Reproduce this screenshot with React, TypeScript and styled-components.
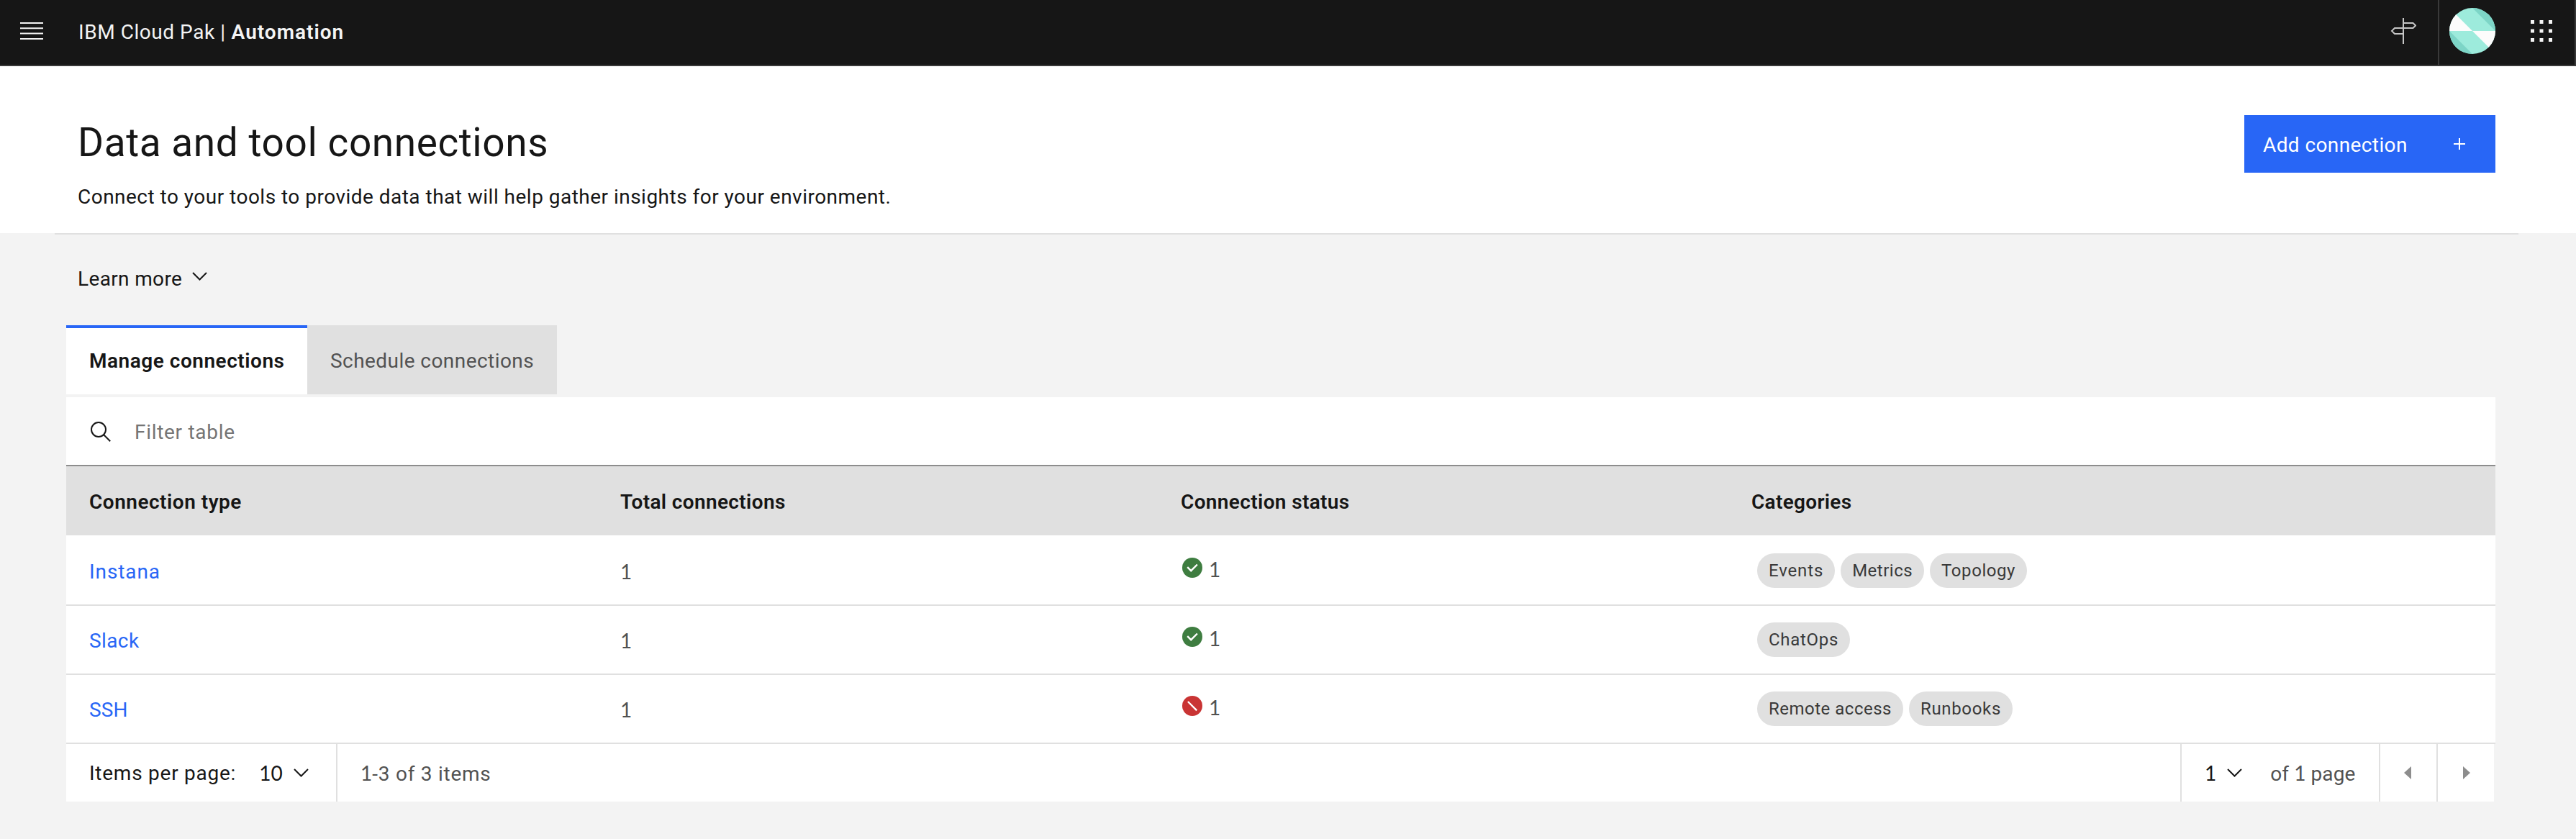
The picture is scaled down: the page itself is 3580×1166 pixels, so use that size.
import React from 'react';
import styled, { createGlobalStyle } from 'styled-components';

const GlobalStyle = createGlobalStyle`
  *, *::before, *::after { box-sizing: border-box; }
  body {
    margin: 0;
    background: #f3f3f3;
    color: #161616;
    font-family: Roboto, "Liberation Sans", sans-serif;
    font-size: 28px;
    line-height: 36px;
  }
  button { font: inherit; color: inherit; border: 0; padding: 0; background: none; }
  svg { display: block; flex: none; }
`;

const Page = styled.div`
  display: flex;
  flex-direction: column;
  height: 1166px;
  overflow: hidden;
  white-space: nowrap;
`;

const Tracked = styled.span<{ $track: number }>`
  letter-spacing: ${(p) => p.$track}px;
`;

const Digits = styled.span`
  padding-bottom: 2px;
  font-family: Lato, Roboto, sans-serif;
  letter-spacing: 0;
`;

/* ---------- Shell header ---------- */

const TopBar = styled.header`
  display: flex;
  align-items: center;
  height: 92px;
  background: #161616;
  border-bottom: 2px solid #393939;
  border-right: 2px solid #393939;
  color: #f4f4f4;
`;

const MenuButton = styled.button`
  display: flex;
  align-items: center;
  padding: 0 49px 4px 28px;
`;

const Product = styled.div`
  flex: 1;
  display: flex;
  gap: 8px;
  padding-bottom: 1px;

  strong { font-weight: 600; }
`;

const HeaderActions = styled.div`
  display: flex;
  align-items: stretch;
  height: 90px;
`;

const HeaderAction = styled.button<{ $width: number; $divided?: boolean; $nudge?: number }>`
  display: flex;
  align-items: center;
  justify-content: center;
  width: ${(p) => p.$width}px;
  padding: 0 0 4px ${(p) => p.$nudge ?? 0}px;
  border-left: ${(p) => (p.$divided ? '2px solid #393939' : '0')};
`;

/* ---------- Page heading ---------- */

const Heading = styled.section`
  display: flex;
  justify-content: space-between;
  align-items: flex-start;
  height: 232px;
  padding: 68px 112px 0 108px;
  background: #fff;
`;

const Title = styled.h1`
  margin: 2px 0 0;
  font-size: 55px;
  font-weight: 400;
  line-height: 73px;
  letter-spacing: 0.56px;
`;

const Subtitle = styled.p`
  margin: 20px 0 0;
  line-height: 37px;
  letter-spacing: 0.48px;
`;

const PrimaryButton = styled.button`
  display: flex;
  align-items: center;
  justify-content: space-between;
  width: 349px;
  height: 80px;
  padding: 0 42px 0 26px;
  background: #2866f6;
  color: #fff;

  span { padding-top: 3px; }
`;

const Rule = styled.hr`
  width: 3424px;
  height: 2px;
  margin: 0 0 0 76px;
  border: 0;
  background: #e0e0e0;
`;

const Disclosure = styled.button`
  display: flex;
  align-items: center;
  gap: 14px;
  width: max-content;
  height: 36px;
  margin: 43px 0 47px 108px;

  svg { margin-bottom: 6px; }
  span { padding-top: 1px; }
`;

/* ---------- Tabs ---------- */

const Tabs = styled.nav`
  display: flex;
  height: 96px;
  margin: 0 0 4px 92px;
`;

const Tab = styled.button<{ $width: number; $active?: boolean }>`
  width: ${(p) => p.$width}px;
  padding: 3px 0 0 32px;
  text-align: left;
  font-weight: ${(p) => (p.$active ? 600 : 400)};
  color: ${(p) => (p.$active ? '#161616' : '#525252')};
  background: ${(p) => (p.$active ? '#fff' : '#e0e0e0')};
  box-shadow: ${(p) => (p.$active ? 'inset 0 4px 0 #2866f6' : 'none')};
`;

/* ---------- Table ---------- */

const TablePanel = styled.section`
  width: 3376px;
  margin-left: 92px;
`;

const FilterBar = styled.div`
  display: flex;
  align-items: center;
  gap: 32px;
  height: 96px;
  padding-left: 33px;
  background: #fff;
  border-bottom: 2px solid #8d8d8d;
  color: #757575;

  span { padding-top: 3px; }
  svg { margin-top: 2px; }
`;

const Row = styled.div<{ $head?: boolean; $line?: boolean }>`
  display: grid;
  grid-template-columns: 738px 779px 793px 1fr;
  align-items: center;
  height: 96px;
  padding: ${(p) => (p.$head ? 1 : 3)}px 0 0 32px;
  border-top: 2px solid ${(p) => (p.$head || p.$line ? '#e0e0e0' : '#fff')};
  background: ${(p) => (p.$head ? '#e0e0e0' : '#fff')};
  color: ${(p) => (p.$head ? '#161616' : '#525252')};
  font-weight: ${(p) => (p.$head ? 600 : 400)};
`;

const TypeLink = styled.a`
  color: #2866f6;
`;

const Status = styled.div`
  display: flex;
  align-items: center;
  gap: 9px;
  padding-left: 2px;
  margin-top: -5px;

  svg { margin-top: -6px; }
`;

const TagList = styled.div`
  display: flex;
  gap: 8px;
  margin: -3px 0 0 8px;
`;

const Tag = styled.span<{ $track: number }>`
  height: 48px;
  padding: 1px 16px 0;
  border-radius: 24px;
  background: #e0e0e0;
  color: #393939;
  font-size: 24px;
  line-height: 47px;
  letter-spacing: ${(p) => p.$track}px;
`;

/* ---------- Pagination ---------- */

const Footer = styled.footer`
  border-top: 2px solid #e0e0e0;
`;

const Pagination = styled.div`
  display: flex;
  width: 3374px;
  height: 80px;
  background: #fff;
`;

const Segment = styled.div<{ $width?: number; $pad: number; $divided?: boolean }>`
  display: flex;
  align-items: center;
  flex: ${(p) => (p.$width ? `0 0 ${p.$width}px` : '1')};
  padding-left: ${(p) => p.$pad}px;
  border-left: ${(p) => (p.$divided ? '2px solid #e0e0e0' : '0')};
  color: #525252;

  > span { padding-top: 2px; }
`;

const Select = styled.button<{ $before: number; $after: number }>`
  display: flex;
  align-items: center;
  gap: 15px;
  margin: 0 ${(p) => p.$after}px 0 ${(p) => p.$before}px;
  color: #161616;

  span { padding-top: 2px; }
`;

const Label = styled(Tracked)`
  color: #161616;
`;

const Chevron = () => (
  <svg width="21" height="12" viewBox="0 0 21 12" fill="none" stroke="#161616" strokeWidth="2">
    <path d="M1 1l9.5 9.5L20 1" />
  </svg>
);

const MenuIcon = () => (
  <svg width="32" height="24" viewBox="0 0 32 24" fill="#f4f4f4">
    <path d="M0 0h32v2H0zM0 7.3h32v2H0zM0 14.6h32v2H0zM0 22h32v2H0z" />
  </svg>
);

const SignpostIcon = () => (
  <svg width="36" height="36" viewBox="0 0 36 36" fill="none" stroke="#c6c6c6" strokeWidth="2">
    <path d="M18 0v36M18 7h13.5l3.5 3.5-3.5 3.5H6l-4 4 4 4h12" />
  </svg>
);

const AvatarIcon = () => (
  <svg width="64" height="64" viewBox="0 0 64 64">
    <clipPath id="disc"><circle cx="32" cy="32" r="32" /></clipPath>
    <g clipPath="url(#disc)">
      <path d="M0 0h64v64H0z" fill="#9debdc" />
      <path d="M32 32H0V0zM32 32h32v32z" fill="#fcfcfc" />
      <path d="M32 0h32v32zM0 32v32h32z" fill="#7dd5c7" />
    </g>
  </svg>
);

const AppsIcon = () => (
  <svg width="30" height="30" viewBox="0 0 30 30" fill="#f4f4f4">
    {[0, 12.5, 25].map((y) =>
      [0, 12.5, 25].map((x) => <rect key={`${x}-${y}`} x={x} y={y} width="5" height="5" />)
    )}
  </svg>
);

const PlusIcon = () => (
  <svg width="16" height="16" viewBox="0 0 16 16" fill="#fff">
    <path d="M7 0h2v7h7v2H9v7H7V9H0V7h7z" />
  </svg>
);

const SearchIcon = () => (
  <svg width="30" height="28" viewBox="0 0 30 28" fill="none" stroke="#161616" strokeWidth="2">
    <circle cx="12" cy="11" r="10" />
    <path d="M19.2 18.2l9 9" />
  </svg>
);

const StatusIcon = ({ ok }: { ok: boolean }) => (
  <svg width="28" height="28" viewBox="0 0 28 28" fill="none" stroke="#fff" strokeWidth="2.4">
    <circle cx="14" cy="14" r="14" fill={ok ? '#3e7d40' : '#c93434'} stroke="none" />
    <path d={ok ? 'M7.2 13.2l5 5 8.7-8.7' : 'M7.9 8l12.3 12.4'} />
  </svg>
);

const CaretIcon = ({ left }: { left?: boolean }) => (
  <svg width="10" height="18" viewBox="0 0 10 18" fill="#8d8d8d">
    <path d={left ? 'M10 0v18L0 9z' : 'M0 0v18l10-9z'} />
  </svg>
);

const columns: [string, number][] = [
  ['Connection type', 0.5],
  ['Total connections', 0.36],
  ['Connection status', 0.36],
  ['Categories', 0.3],
];

const rows: { name: string; track: number; ok: boolean; tags: [string, number][] }[] = [
  { name: 'Instana', track: 0.9, ok: true, tags: [['Events', 0.85], ['Metrics', 0.5], ['Topology', 0.57]] },
  { name: 'Slack', track: 0.4, ok: true, tags: [['ChatOps', 0.7]] },
  { name: 'SSH', track: 0.1, ok: false, tags: [['Remote access', 0.5], ['Runbooks', 0.66]] },
];

export default function App() {
  return (
    <Page>
      <GlobalStyle />
      <TopBar>
        <MenuButton aria-label="Menu"><MenuIcon /></MenuButton>
        <Product>
          <Tracked $track={0.55}>IBM Cloud Pak |</Tracked>
          <Tracked as="strong" $track={1}>Automation</Tracked>
        </Product>
        <HeaderActions>
          <HeaderAction $width={96} aria-label="Guide"><SignpostIcon /></HeaderAction>
          <HeaderAction $width={94} $divided aria-label="Account"><AvatarIcon /></HeaderAction>
          <HeaderAction $width={96} $nudge={4} aria-label="Applications"><AppsIcon /></HeaderAction>
        </HeaderActions>
      </TopBar>

      <Heading>
        <div>
          <Title>Data and tool connections</Title>
          <Subtitle>
            Connect to your tools to provide data that will help gather insights for your environment.
          </Subtitle>
        </div>
        <PrimaryButton>
          <Tracked $track={0.4}>Add connection</Tracked>
          <PlusIcon />
        </PrimaryButton>
      </Heading>
      <Rule />

      <Disclosure>
        <Tracked $track={0.35}>Learn more</Tracked>
        <Chevron />
      </Disclosure>

      <Tabs>
        <Tab $width={335} $active><Tracked $track={0.52}>Manage connections</Tracked></Tab>
        <Tab $width={347}><Tracked $track={0.44}>Schedule connections</Tracked></Tab>
      </Tabs>

      <TablePanel>
        <FilterBar>
          <SearchIcon />
          <Tracked $track={0.7}>Filter table</Tracked>
        </FilterBar>
        <Row $head>
          {columns.map(([title, track]) => (
            <Tracked key={title} $track={track}>{title}</Tracked>
          ))}
        </Row>
        {rows.map((row, i) => (
          <Row key={row.name} $line={i > 0}>
            <TypeLink><Tracked $track={row.track}>{row.name}</Tracked></TypeLink>
            <Digits>1</Digits>
            <Status>
              <StatusIcon ok={row.ok} />
              <Digits>1</Digits>
            </Status>
            <TagList>
              {row.tags.map(([tag, track]) => <Tag key={tag} $track={track}>{tag}</Tag>)}
            </TagList>
          </Row>
        ))}
        <Footer>
          <Pagination>
            <Segment $width={375} $pad={32}>
              <Label $track={0.75}>Items per page:</Label>
              <Select $before={32} $after={0}>
                <Digits>10</Digits>
                <Chevron />
              </Select>
            </Segment>
            <Segment $pad={32} $divided>
              <Tracked $track={0.75}><Digits>1</Digits>-3 of 3 items</Tracked>
            </Segment>
            <Segment $width={276} $pad={32} $divided>
              <Select $before={0} $after={39}>
                <Digits>1</Digits>
                <Chevron />
              </Select>
              <Tracked $track={0.1}>of <Digits>1</Digits> page</Tracked>
            </Segment>
            <Segment $width={80} $pad={33} $divided><CaretIcon left /></Segment>
            <Segment $width={80} $pad={35} $divided><CaretIcon /></Segment>
          </Pagination>
        </Footer>
      </TablePanel>
    </Page>
  );
}
